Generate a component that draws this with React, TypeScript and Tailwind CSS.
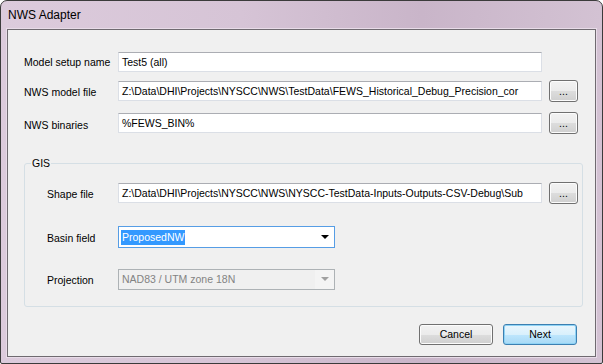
import type { ReactNode } from 'react';

const TextBox = ({ value }: { value: string }) => (
  <div className="w-[424px] h-[20px] bg-white border border-[#dbdfe6] border-t-[#abadb3] px-[3px] text-[10.5px] leading-[18px] text-black whitespace-nowrap overflow-hidden">
    {value}
  </div>
);

const BrowseButton = () => (
  <button className="ml-[7px] w-[29px] h-[22px] rounded-[3px] border border-[#707070] bg-[linear-gradient(#f2f2f2_0%,#ebebeb_50%,#dddddd_50%,#cfcfcf_100%)] shadow-[inset_0_0_0_1px_#fcfcfc] text-[10.5px] leading-[18px] text-black flex items-end justify-center pb-[1px]">
    ...
  </button>
);

const Label = ({ children, w, dy = 0 }: { children: ReactNode; w: string; dy?: number }) => (
  <div className={`${w} text-[10.5px] leading-[13px] text-black`} style={{ marginTop: dy }}>
    {children}
  </div>
);

const DialogButton = ({ children, isDefault }: { children: ReactNode; isDefault?: boolean }) => (
  <button
    className={
      isDefault
        ? 'w-[74px] h-[21px] rounded-[3px] border border-[#3c7fb1] bg-[linear-gradient(#eaf6fd_0%,#d9f0fc_50%,#bee6fd_50%,#a7d9f5_100%)] shadow-[inset_0_0_0_1px_#8fd3f5] text-[10.5px] text-black'
        : 'w-[74px] h-[21px] rounded-[3px] border border-[#707070] bg-[linear-gradient(#f2f2f2_0%,#ebebeb_50%,#dddddd_50%,#cfcfcf_100%)] shadow-[inset_0_0_0_1px_#fcfcfc] text-[10.5px] text-black'
    }
  >
    {children}
  </button>
);

const App = () => {
  return (
    <div className="w-[603px] h-[364px] font-['Liberation_Sans',Arial,sans-serif] bg-white">
      <div className="w-[603px] h-[364px] rounded-t-[7px] rounded-b-[2px] border border-[#3b3b3b] bg-[linear-gradient(90deg,#dccbdc_0%,#d6c4d6_40%,#c9b5c9_70%,#d3c2d3_100%)] flex flex-col">
        {/* title bar */}
        <div className="h-[28px] pl-[7px] pt-[7px] text-[12px] leading-[14px] text-black">NWS Adapter</div>

        {/* client area */}
        <div className="ml-[6px] w-[589px] h-[328px] border border-[#6f6a70] bg-[#f0f0f0] shadow-[0_0_0_1px_#e8dce8] flex flex-col pl-[16px] pt-[21px]">
          <div className="h-[22px] flex items-center">
            <Label w="w-[94px]" dy={0}>Model setup name</Label>
            <TextBox value="Test5 (all)" />
          </div>
          <div className="mt-[7px] h-[22px] flex items-center">
            <Label w="w-[94px]" dy={3}>NWS model file</Label>
            <TextBox value="Z:\Data\DHI\Projects\NYSCC\NWS\TestData\FEWS_Historical_Debug_Precision_cor" />
            <BrowseButton />
          </div>
          <div className="mt-[10px] h-[22px] flex items-center">
            <Label w="w-[94px]" dy={5}>NWS binaries</Label>
            <TextBox value="%FEWS_BIN%" />
            <BrowseButton />
          </div>

          <fieldset className="mt-[23px] w-[559px] h-[150px] border border-[#d5dfe5] rounded-[3px] flex flex-col">
            <legend className="ml-[6px] px-[1px] text-[10.5px] leading-[13px] text-black">GIS</legend>
            <div className="mt-[12px] pl-[22px] flex flex-col">
              <div className="h-[22px] flex items-center">
                <Label w="w-[71px]" dy={3}>Shape file</Label>
                <TextBox value="Z:\Data\DHI\Projects\NYSCC\NWS\NYSCC-TestData-Inputs-Outputs-CSV-Debug\Sub" />
                <BrowseButton />
              </div>
              <div className="mt-[22px] h-[22px] flex items-center">
                <Label w="w-[71px]" dy={3}>Basin field</Label>
                <div className="w-[217px] h-[22px] bg-white border border-[#569de5] flex items-center pl-[2px] pr-[4px]">
                  <span className="bg-[#3399ff] text-white text-[10.5px] leading-[15px] px-[1px]">ProposedNW</span>
                  <span className="ml-auto mr-[1px] w-0 h-0 border-l-[4px] border-r-[4px] border-t-[4px] border-l-transparent border-r-transparent border-t-black" />
                </div>
              </div>
              <div className="mt-[20px] h-[22px] flex items-center">
                <Label w="w-[71px]" dy={3}>Projection</Label>
                <div className="w-[217px] h-[21px] bg-[#f4f4f4] border border-[#adb2b5] flex items-center pr-[4px]">
                  <div className="w-[196px] h-[19px] bg-[#f0f0f0] pl-[3px] text-[10.5px] leading-[19px] text-[#838383]">NAD83 / UTM zone 18N</div>
                  <span className="ml-auto mr-[1px] w-0 h-0 border-l-[4px] border-r-[4px] border-t-[4px] border-l-transparent border-r-transparent border-t-[#a0a0a0]" />
                </div>
              </div>
            </div>
          </fieldset>

          <div className="mt-[17px] pr-[18px] flex justify-end gap-[10px]">
            <DialogButton>Cancel</DialogButton>
            <DialogButton isDefault>Next</DialogButton>
          </div>
        </div>
      </div>
    </div>
  );
};

export default App;
